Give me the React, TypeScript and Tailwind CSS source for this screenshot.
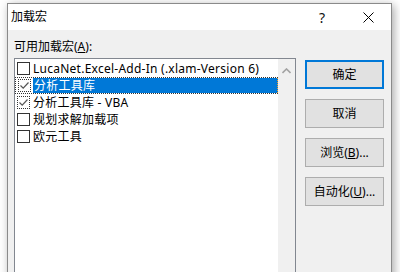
import React from "react";

const FONT = { fontFamily: '"Noto Sans", "Noto Sans CJK SC", sans-serif' };

type Item = { label: string; checked: boolean; selected?: boolean };

const items: Item[] = [
  { label: "LucaNet.Excel-Add-In (.xlam-Version 6)", checked: false },
  { label: "分析工具库", checked: true, selected: true },
  { label: "分析工具库 - VBA", checked: true },
  { label: "规划求解加载项", checked: false },
  { label: "欧元工具", checked: false },
];

function Check({ checked }: { checked: boolean }) {
  return (
    <div
      className={
        "ml-[2px] flex h-[13px] w-[13px] shrink-0 items-center justify-center bg-white " +
        (checked ? "border border-dotted border-[#333]" : "border border-[#333]")
      }
    >
      {checked && (
        <svg width="11" height="11" viewBox="0 0 11 11" fill="none">
          <path d="M1.5 5.5 L4.2 8.2 L9.5 2.5" stroke="#555" strokeWidth="1.2" />
        </svg>
      )}
    </div>
  );
}

function Btn({ children, primary }: { children: React.ReactNode; primary?: boolean }) {
  return (
    <div
      className={
        "flex h-[29px] w-[79px] items-center justify-center bg-[#e1e1e1] text-[12px] text-black " +
        (primary ? "border-2 border-[#0078d7]" : "border border-[#adadad]")
      }
    >
      {children}
    </div>
  );
}

export default function App() {
  return (
    <div className="h-[272px] w-[400px] overflow-hidden bg-white pl-[7px] pt-[3px]" style={FONT}>
      <div className="flex h-[300px] w-[385px] flex-col border border-[#8a8a8a] bg-[#f0f0f0] shadow-[2px_2px_9px_rgba(0,0,0,0.35)]">
        {/* title bar */}
        <div className="flex h-[26px] items-center bg-white">
          <span className="pl-[3px] text-[12px] text-black">加载宏</span>
          <div className="ml-auto flex h-full">
            <div className="flex w-[46px] items-center justify-center text-[14px] text-[#111]">?</div>
            <div className="flex w-[46px] items-center justify-center">
              <svg width="11" height="11" viewBox="0 0 11 11">
                <path d="M0.5 0.5 L10.5 10.5 M10.5 0.5 L0.5 10.5" stroke="#000" strokeWidth="1" />
              </svg>
            </div>
          </div>
        </div>

        {/* body */}
        <div className="flex flex-1 items-start px-[6px] pt-[9px]">
          <div className="flex flex-col">
            <div className="mb-[3px] h-[16px] text-[12px] leading-[16px] text-black">
              可用加载宏(<span className="underline">A</span>):
            </div>
            <div className="flex h-[240px] w-[282px] border border-[#828790] bg-white">
              <div className="flex w-[263px] flex-col pt-[1px]">
                {items.map((it) => (
                  <div
                    key={it.label}
                    className={
                      "flex h-[17px] items-center " +
                      (it.selected ? "border-y border-l border-dotted border-[#333]" : "")
                    }
                  >
                    <Check checked={it.checked} />
                    <div
                      className={
                        "ml-[2px] flex h-full flex-1 items-center pl-[1px] text-[12px] tracking-[0.25px] whitespace-nowrap " +
                        (it.selected
                          ? "border-r border-dotted border-[#f0a030] bg-[#0078d7] text-white"
                          : "text-black")
                      }
                    >
                      {it.label}
                    </div>
                  </div>
                ))}
              </div>
              <div className="flex w-[17px] justify-center bg-[#f0f0f0] pt-[9px]">
                <svg width="9" height="6" viewBox="0 0 9 6">
                  <path d="M0.5 5 L4.5 1 L8.5 5" stroke="#a3a3a3" strokeWidth="1.6" fill="none" />
                </svg>
              </div>
            </div>
          </div>

          <div className="ml-[9px] mt-[21px] flex flex-col gap-[10px]">
            <Btn primary>确定</Btn>
            <Btn>取消</Btn>
            <Btn>
              浏览(<span className="underline">B</span>)...
            </Btn>
            <Btn>
              自动化(<span className="underline">U</span>)...
            </Btn>
          </div>
        </div>
      </div>
    </div>
  );
}
